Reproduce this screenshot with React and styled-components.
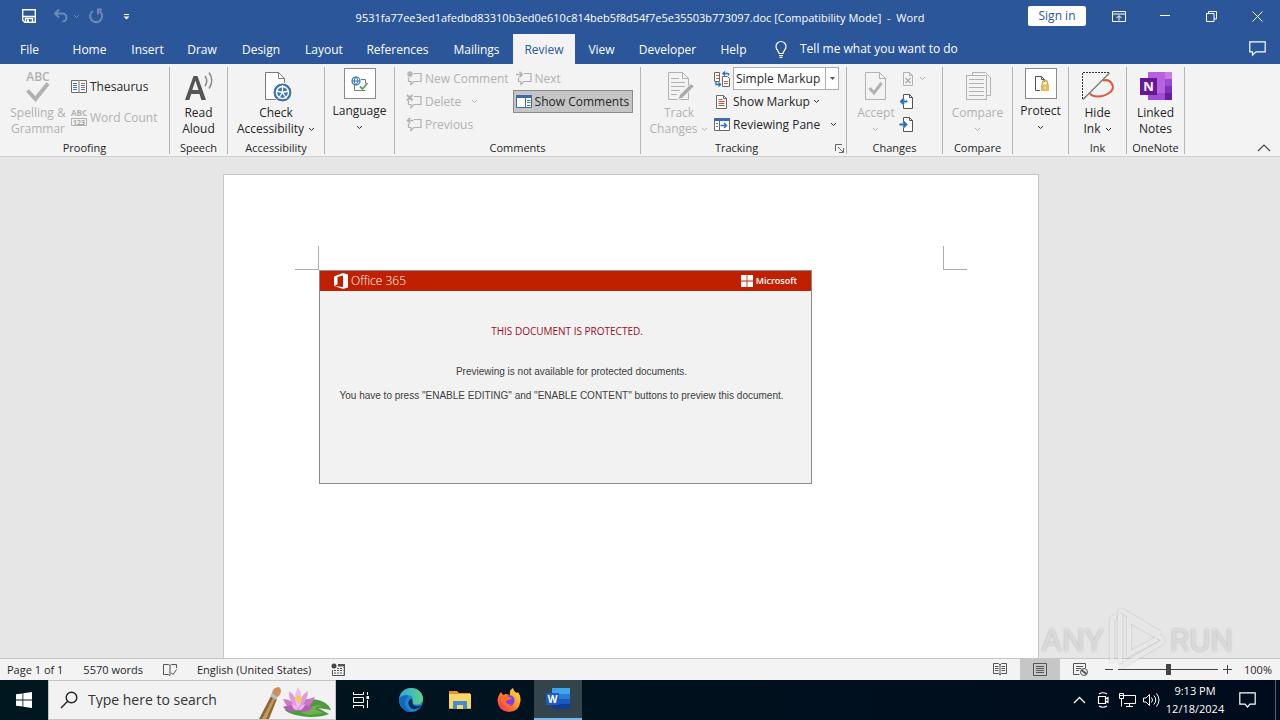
import React, { useState } from 'react';
import styled, { createGlobalStyle } from 'styled-components';

const GlobalStyle = createGlobalStyle`
  * { box-sizing: border-box; }
  body { margin: 0; }
  button, input, select { font: inherit; color: inherit; }
  button { background: none; border: 0; padding: 0; cursor: default; }
  svg { display: block; flex: none; overflow: visible; }
`;

/* ---------- Shell ---------- */

const Shell = styled.div`
  display: flex;
  flex-direction: column;
  height: 100vh;
  overflow: hidden;
  font-family: 'Open Sans', 'Noto Sans', sans-serif;
  font-size: 12px;
  line-height: 16px;
  color: #262626;
  background: #e6e6e6;
`;

const TitleBar = styled.header`
  display: grid;
  grid-template-columns: 1fr auto 1fr;
  align-items: center;
  height: 32px;
  color: #fff;
  background: #2b579a;
`;

const QuickAccess = styled.div`
  display: flex;
  align-items: center;
  gap: 8px;
  padding-left: 21px;
`;

const DocTitle = styled.h1`
  margin: 0;
  padding-top: 3px;
  font-size: 11px;
  font-weight: 400;
  white-space: pre;
`;

const WindowControls = styled.div`
  display: flex;
  align-items: center;
  justify-content: flex-end;
`;

const SignIn = styled.button`
  width: 58px;
  height: 20px;
  margin-right: 10px;
  color: #2b579a;
  background: #fff;
  border-radius: 2px;
`;

const WindowButton = styled.button`
  display: grid;
  place-items: center;
  width: ${(p) => p.$w || 46}px;
  height: 30px;
`;

const PlainButton = styled.button`
  display: grid;
  place-items: center;
  opacity: ${(p) => (p.$dim ? 0.3 : 1)};
`;

const TabBar = styled.nav`
  display: flex;
  align-items: flex-end;
  height: 32px;
  color: #fff;
  background: #2b579a;
`;

const Tab = styled.button`
  width: ${(p) => p.$w}px;
  height: 30px;
  padding-top: 2px;
  white-space: nowrap;
  color: ${(p) => (p.$active ? '#2b579a' : '#fff')};
  background: ${(p) => (p.$active ? '#f3f3f3' : 'transparent')};
`;

const TellMe = styled.button`
  display: flex;
  align-items: center;
  gap: 13px;
  height: 30px;
  margin-left: 15px;
`;

const CommentsButton = styled.button`
  display: grid;
  place-items: center;
  width: 46px;
  height: 32px;
  margin-left: auto;
`;

/* ---------- Ribbon ---------- */

const Ribbon = styled.section`
  display: flex;
  height: 93px;
  padding: 3px 0 2px;
  background: #f3f3f3;
  border-bottom: 1px solid #d2d0ce;
`;

const Group = styled.div`
  display: flex;
  flex: none;
  flex-direction: column;
  width: ${(p) => p.$w}px;
  border-right: 1px solid #b5b5b5;
`;

const GroupBody = styled.div`
  display: flex;
  flex: 1;
  justify-content: ${(p) => p.$justify || 'center'};
  padding-left: ${(p) => p.$pad || 0}px;
`;

const Caption = styled.div`
  display: flex;
  align-items: center;
  height: 12px;
  line-height: 12px;
  font-size: 11px;

  span {
    flex: 1;
    text-align: center;
  }
`;

const BigButton = styled.button`
  display: flex;
  flex-direction: column;
  align-items: center;
  gap: 2px;
  width: ${(p) => p.$w || 58}px;
  height: 72px;
  padding-top: 4px;
  white-space: nowrap;
  color: ${(p) => (p.disabled ? '#b1b1b1' : '#262626')};
`;

const BoxedButton = styled(BigButton)`
  padding-top: 1px;
  gap: 4px;
`;

const IconBox = styled.span`
  display: grid;
  place-items: center;
  width: 32px;
  height: 31px;
  background: #fff;
  border: 1px solid #8a8a8a;
`;

const Line = styled.span`
  display: flex;
  align-items: center;
  justify-content: center;
  gap: 4px;
  height: 16px;
`;

const Labels = styled.span`
  display: flex;
  flex-direction: column;
`;

const Stack = styled.div`
  display: flex;
  flex-direction: column;
  align-items: flex-start;
  padding-top: ${(p) => p.$top || 0}px;
  margin-left: ${(p) => p.$ml || 0}px;
`;

const SmallButton = styled.button`
  display: flex;
  align-items: center;
  gap: 3px;
  height: ${(p) => p.$h || 23}px;
  padding: 0 3px 0 2px;
  white-space: nowrap;
  color: ${(p) => (p.disabled ? '#b1b1b1' : '#262626')};
  background: ${(p) => (p.$on ? '#c5c5c5' : 'transparent')};
  border: 1px solid ${(p) => (p.$on ? '#8a8a8a' : 'transparent')};
`;

const Spacer = styled.span`
  width: 4px;
`;

const MarkupRow = styled.label`
  display: flex;
  align-items: center;
  gap: 3px;
  height: 23px;
  padding-left: 3px;
`;

const SelectFrame = styled.span`
  display: flex;
  width: 106px;
  height: 23px;
  background: #fff;
  border: 1px solid #ababab;

  select {
    flex: 1;
    min-width: 0;
    padding: 0 2px;
    appearance: none;
    background: none;
    border: 0;
    outline: 0;
  }

  i {
    display: grid;
    place-items: center;
    width: 13px;
    border-left: 1px solid #ababab;
    pointer-events: none;
  }
`;

const Launcher = styled.button`
  width: 14px;
  height: 12px;
  padding-left: 3px;
`;

const Collapse = styled.button`
  align-self: flex-end;
  margin: 0 9px 0 auto;
`;

/* ---------- Document ---------- */

const Workspace = styled.main`
  display: flex;
  flex: 1;
  justify-content: center;
  min-height: 0;
  padding: 17px 18px 0 0;
  overflow: hidden;
`;

const Paper = styled.article`
  width: 816px;
  background: #fff;
  border: 1px solid #c6c6c6;
  border-bottom: 0;
`;

const MarginRow = styled.div`
  display: flex;
  align-items: flex-end;
  justify-content: space-between;
  height: 95px;
  padding: 0 71px;
`;

const CropMark = styled.span`
  width: 24px;
  height: 24px;
  border: solid #ababab;
  border-width: ${(p) => (p.$side === 'left' ? '0 1px 1px 0' : '0 0 1px 1px')};
`;

const Notice = styled.section`
  width: 493px;
  height: 214px;
  margin-left: 95px;
  text-align: center;
  color: #404040;
  background: #f2f2f2;
  border: 1px solid #8a8a8a;
`;

const NoticeBar = styled.div`
  display: flex;
  align-items: center;
  justify-content: space-between;
  height: 20px;
  padding: 0 14px;
  color: #fff;
  background: #c01f00;
`;

const Brand = styled.span`
  display: flex;
  align-items: center;
  gap: 3px;
  font-size: ${(p) => p.$size}px;
  font-weight: ${(p) => p.$weight};
`;

const NoticeTitle = styled.h2`
  margin: 32px 0 21px;
  padding-left: 3px;
  font-size: 10px;
  font-weight: 400;
  line-height: 16px;
  color: #9c0c1c;
`;

const NoticeText = styled.p`
  margin: 0 8px 0 ${(p) => p.$indent || 0}px;
  font-family: 'Liberation Sans', Arial, sans-serif;
  font-size: 10px;
  line-height: 24px;
`;

/* ---------- Watermark ---------- */

const Watermark = styled.div`
  position: absolute;
  right: 47px;
  bottom: 48px;
  display: flex;
  align-items: center;
  gap: 5px;
  font-family: Roboto, 'Liberation Sans', sans-serif;
  font-size: 32px;
  line-height: 64px;
  color: rgba(255, 255, 255, 0.55);
  text-shadow: 0 0 2px rgba(120, 120, 120, 0.6);
  pointer-events: none;

  svg {
    filter: drop-shadow(0 0 1px rgba(120, 120, 120, 0.6));
  }
`;

/* ---------- Status bar ---------- */

const StatusBar = styled.footer`
  display: flex;
  align-items: center;
  height: 22px;
  padding: 0 8px 0 7px;
  font-size: 11px;
  background: #f3f3f3;
  border-top: 1px solid #c6c6c6;
`;

const StatusLeft = styled.div`
  display: flex;
  align-items: center;
  gap: 20px;
`;

const StatusRight = styled.div`
  display: flex;
  align-items: center;
  height: 100%;
  margin-left: auto;
`;

const ViewButton = styled.button`
  display: grid;
  place-items: center;
  width: 40px;
  height: 100%;
  background: ${(p) => (p.$on ? '#c6c6c6' : 'transparent')};
`;

const ZoomButton = styled.button`
  display: grid;
  place-items: center;
  width: 18px;
  height: 20px;
`;

const ZoomSlider = styled.input`
  width: 100px;
  height: 12px;
  margin: 0;
  appearance: none;
  background: linear-gradient(#444, #444) center / 100% 1px no-repeat;

  &::-webkit-slider-thumb {
    appearance: none;
    width: 5px;
    height: 11px;
    background: #444;
  }
`;

const ZoomValue = styled.button`
  width: 36px;
  text-align: right;
`;

/* ---------- Taskbar ---------- */

const Taskbar = styled.div`
  display: flex;
  height: 40px;
  color: #fff;
  background: linear-gradient(90deg, #00171f, #000c1d);
`;

const TaskButton = styled.button`
  display: grid;
  place-items: center;
  width: ${(p) => p.$w || 49}px;
  height: 40px;
  background: ${(p) => (p.$on ? '#33444c' : 'transparent')};
  border-bottom: ${(p) => (p.$on ? '2px solid #76b9ed' : '0')};
`;

const SearchBox = styled.label`
  display: flex;
  align-items: center;
  gap: 10px;
  width: 288px;
  padding-left: 11px;
  color: #222;
  background: #f2f2f2;
  border: 1px solid #c4c4c4;

  input {
    flex: 1;
    min-width: 0;
    padding: 0;
    font-size: 14px;
    background: none;
    border: 0;
    outline: 0;
  }

  input::placeholder {
    color: #333;
    opacity: 1;
  }
`;

const Tray = styled.div`
  display: flex;
  align-items: center;
  margin-left: auto;
`;

const Clock = styled.time`
  width: 64px;
  font-size: 11px;
  line-height: 18px;
  text-align: center;
`;

const ShowDesktop = styled.button`
  width: 5px;
  height: 40px;
  margin-left: 8px;
  border-left: 1px solid #5b6670;
`;

/* ---------- Icons ---------- */

const Svg = ({ w = 16, h = 16, box, children, ...rest }) => (
  <svg width={w} height={h} viewBox={box || `0 0 ${w} ${h}`} fill="none" stroke="currentColor" aria-hidden="true" {...rest}>
    {children}
  </svg>
);

const Chevron = () => (
  <Svg w={7} h={5}><path d="M1 1l2.5 2.5L6 1" /></Svg>
);

const SaveIcon = () => (
  <Svg><path d="M1.700 1.700h12.600v12.600H3.700l-2-2z" strokeWidth="1.400" /><path d="M2 8.500h12M4.500 14v-3.500h7V14" strokeWidth="1.400" /><path d="M6 11.500h2V14H6z" fill="currentColor" stroke="none" /></Svg>
);

const UndoIcon = () => (
  <Svg strokeWidth="2"><path d="M2 5.500h7.500a4 4 0 0 1 0 8M6 1.500l-4 4 4 4" /></Svg>
);

const RedoIcon = () => (
  <Svg strokeWidth="2"><path d="M11.500 3.200A6 6 0 1 1 5 3M14 1.500h-4v5" /></Svg>
);

const CustomizeIcon = () => (
  <Svg w={7} h={7}><path d="M1 1.500h5" /><path d="M.5 3.500h6l-3 3z" fill="currentColor" stroke="none" /></Svg>
);

const RibbonOptionsIcon = () => (
  <Svg w={14} h={11}><path d="M.5.5h13v10H.5zM.5 3h13M7 9.500V5M4.500 7L7 4.500 9.500 7" /></Svg>
);

const MinimizeIcon = () => <Svg w={10} h={10}><path d="M0 4.500h10" /></Svg>;

const RestoreIcon = () => (
  <Svg w={11} h={11}><path d="M.5 2.500h7.500v8H.5zM2.500 2.500v-2h8v7.500H8" /></Svg>
);

const CloseIcon = () => <Svg w={11} h={11}><path d="M.5.5l10 10M10.500.5l-10 10" /></Svg>;

const BulbIcon = () => (
  <Svg w={12} h={17} strokeWidth="1.200"><path d="M4 12.500C4 10 1 9 1 5.500a5 5 0 0 1 10 0C11 9 8 10 8 12.500zM4 14.500h4M4.500 16.400h3" /></Svg>
);

const BubbleIcon = () => (
  <Svg w={17} h={15} strokeWidth="1.200"><path d="M.8.8h15.400v10H7l-3.500 3.400v-3.400H.8z" /></Svg>
);

const SpellingIcon = () => (
  <Svg w={32} h={32}>
    <text x="16" y="10" textAnchor="middle" fontSize="12" fontWeight="600" fill="#b1b1b1" stroke="none">ABC</text>
    <path d="M5.500 19.500l8 8.500L26 12.500" stroke="#b1b1b1" strokeWidth="4" />
  </Svg>
);

const ThesaurusIcon = () => (
  <Svg>
    <path d="M.5 1.500h7l.5.5.5-.5h7v12h-7l-.5.5-.5-.5h-7z" fill="#fff" stroke="#6a6a6a" />
    <path d="M8 2v12" stroke="#6a6a6a" />
    <path d="M2 4.500h4M2 6.500h4M2 8.500h4M2 10.500h4M10 6.500h4M10 10.500h4" stroke="#4472b8" />
    <path d="M10 4.500h4M10 8.500h4" stroke="#c8604a" />
  </Svg>
);

const WordCountIcon = () => (
  <Svg stroke="#b1b1b1">
    <text x="8" y="6" textAnchor="middle" fontSize="8" fontWeight="700" fill="#b1b1b1" stroke="none">ABC</text>
    <path d="M.5 8.500h15v7H.5z" />
    <text x="8" y="15" textAnchor="middle" fontSize="7" fontWeight="700" fill="#a5a5a5" stroke="none">123</text>
  </Svg>
);

const ReadAloudIcon = () => (
  <Svg w={32} h={32}>
    <path d="M2 29L10.500 5h4L23 29h-4.600l-1.900-6H8.200l-1.800 6zM9.300 19h6.200L12.400 9.500z" fill="#555" stroke="none" />
    <path d="M22 5q3.500 5 0 10M26 1.500q5.500 8 0 16" stroke="#8a8a8a" strokeWidth="1.500" />
  </Svg>
);

const AccessibilityIcon = () => (
  <Svg w={32} h={32}>
    <path d="M5.500 1.500h13l6 6v21h-19z" fill="#fff" stroke="#7a7a7a" />
    <path d="M18.500 1.500v6h6" stroke="#7a7a7a" />
    <circle cx="22.500" cy="21.500" r="9.500" fill="#3d73ae" stroke="#fff" />
    <circle cx="22.500" cy="21.500" r="6" stroke="#fff" strokeWidth="1.500" />
    <path d="M22.500 14v7.500M16.500 20l6 1.500 6-1.500M18.500 27.500l4-6 4 6" stroke="#fff" strokeWidth="1.300" />
  </Svg>
);

const LanguageIcon = () => (
  <Svg w={18} h={16}>
    <path d="M10 3.500h4.500v4M3.500 9v5.500h11" stroke="#7a7a7a" />
    <circle cx="5" cy="5" r="4" stroke="#2f72b5" strokeWidth="1.200" />
    <path d="M1 5h8M5 1q-3.500 4 0 8M5 1q3.500 4 0 8" stroke="#2f72b5" />
    <path d="M9 10.500l2.500 2.500 5-6" stroke="#5b9e6c" strokeWidth="1.800" />
  </Svg>
);

const CommentIcon = ({ mark }) => (
  <Svg stroke="#b1b1b1" strokeWidth="1.200">
    <path d="M8 2.500h7v8H8L5 13.500v-3H2.500v-4" />
    {mark === 'add' && <path d="M4 0v6.500M1 3.200h6.500M1.800 1l4.400 4.400M6.200 1L1.800 5.400" />}
    {mark === 'delete' && <path d="M1 1l5.500 5.500M6.500 1L1 6.500" strokeWidth="1.800" />}
    {mark === 'prev' && <path d="M7.500 3.500H1.500M4.200.8L1.500 3.500l2.700 2.700" strokeWidth="1.600" />}
    {mark === 'next' && <path d="M0 3.500h6M3.500.8l2.700 2.700-2.700 2.700" strokeWidth="1.600" />}
  </Svg>
);

const ShowCommentsIcon = () => (
  <Svg>
    <path d="M.5 1.500h15v12H.5z" fill="#fff" stroke="#3b6cae" />
    <path d="M0 1h16v3H0z" fill="#3b6cae" stroke="none" />
    <path d="M9.500 4v10" stroke="#3b6cae" />
    <path d="M11 6.500h3.500M11 8.500h3.500M11 11.500h3.500" stroke="#3b6cae" />
  </Svg>
);

const TrackChangesIcon = () => (
  <Svg w={32} h={32} stroke="#b1b1b1">
    <path d="M5.500 1.500h14l6 6v21h-20z" /><path d="M19.500 1.500v6h6M8 7.500h8M8 11.500h14M8 15.500h14M8 19.500h9M8 23.500h6" />
    <path d="M15 28.500l1.500-4.500L28 12.500l3 3-11.500 11.500z" fill="#a9a9a9" stroke="#f3f3f3" />
  </Svg>
);

const MarkupIcon = () => (
  <Svg>
    <path d="M.5 1.500h5v9h-5zM8.500 5.500h5l2 2v8h-7z" fill="#fff" stroke="#6a6a6a" />
    <path d="M2 4.500h3M2 7.500h3M10 10.500h4M10 12.500h4" stroke="#c8604a" />
    <path d="M9 2.500h5M11 .5l-2 2 2 2M14.500 2v2.500M2 11v2.500h4M4.500 11.500l2 2-2 2" stroke="#2f72b5" strokeWidth="1.400" />
  </Svg>
);

const ShowMarkupIcon = () => (
  <Svg>
    <path d="M2.500 1.500h7l3 3v10h-10z" fill="#fff" stroke="#6a6a6a" /><path d="M9.500 1.500v3h3" stroke="#6a6a6a" />
    <path d="M4.500 5.500h4M4.500 7.500h6M4.500 9.500h6M4.500 11.500h6" stroke="#d0533b" />
  </Svg>
);

const ReviewPaneIcon = () => (
  <Svg>
    <path d="M.5 1.500h15v12H.5z" fill="#fff" stroke="#6a6a6a" /><path d="M0 1h16v3H0z" fill="#3b6cae" stroke="none" />
    <path d="M5.500 4v10" stroke="#6a6a6a" /><path d="M2 6.500h2M2 9.500h2" stroke="#6a6a6a" />
    <path d="M6.500 8.500h6M10 6l2.500 2.500L10 11" stroke="#2f72b5" strokeWidth="1.500" />
  </Svg>
);

const AcceptIcon = () => (
  <Svg w={32} h={32} stroke="#b1b1b1">
    <path d="M5.500 1.500h14l6 6v21h-20z" /><path d="M19.500 1.500v6h6" /><path d="M9.500 17l4.500 5 7.500-10" strokeWidth="3" />
  </Svg>
);

const RejectIcon = () => (
  <Svg stroke="#b1b1b1"><path d="M3.500 1.500h6l3 3v10h-9z" /><path d="M9.500 1.500v3h3" /><path d="M5.500 7l5 5M10.500 7l-5 5" strokeWidth="1.500" /></Svg>
);

const StepIcon = ({ back }) => (
  <Svg>
    <path d="M3.500 4.500v-4h6l3 3v11h-9V11" fill="#fff" stroke="#555" /><path d="M9.500.5v3h3" stroke="#555" />
    <path d={back ? 'M7.500 7.500H1M4 4.500l-3 3 3 3' : 'M-.5 7.500H6M3.300 4.500l3 3-3 3'} stroke="#2f6fb0" strokeWidth="2" />
  </Svg>
);

const CompareIcon = () => (
  <Svg w={32} h={32} stroke="#b1b1b1">
    <path d="M10.500 4V1.500h13l5 5v18H25" /><path d="M4.500 4.500h20v24h-20z" fill="#f3f3f3" />
    <path d="M7 8.500h15M7 12.500h15M7 16.500h15M7 20.500h15M7 24.500h15" />
  </Svg>
);

const ProtectIcon = () => (
  <Svg w={16} h={16}>
    <path d="M2.500.5h6l3 3V6M7 14.500H2.500V.5" stroke="#555" /><path d="M8.500.5v3h3" stroke="#555" />
    <path d="M8 8.500h8V15H8z" fill="#e9b95c" stroke="none" /><path d="M9.500 9V7a2.500 2.500 0 0 1 5 0v2" stroke="#d9a441" strokeWidth="1.300" />
    <path d="M12 10.500v2.500" stroke="#fff" />
  </Svg>
);

const HideInkIcon = () => (
  <Svg w={32} h={32}>
    <path d="M.5 28V1.500H27" stroke="#333" strokeDasharray="2 1" />
    <path d="M21 9.500c8-2 14 7 6 12.500-7 5-17 4-19 .5" stroke="#e0563f" strokeWidth="2" />
    <path d="M1 28.500L27.500 2" stroke="#777" strokeWidth="1.300" />
  </Svg>
);

const OneNoteIcon = () => (
  <Svg w={32} h={32} stroke="none">
    <path d="M8 1h24v28H8z" fill="#b763e0" /><path d="M25 1h7v7h-7z" fill="#c77bea" /><path d="M25 8h7v7h-7z" fill="#9a4bd0" />
    <path d="M25 15h7v7h-7z" fill="#8131b5" /><path d="M8 22h17v7H8z" fill="#a24bd3" /><path d="M25 22h7v7h-7z" fill="#671c9c" />
    <path d="M0 7h17v17H0z" fill="#6b1696" />
    <text x="8.500" y="20" textAnchor="middle" fontSize="13" fontWeight="700" fill="#fff">N</text>
  </Svg>
);

const LauncherIcon = () => (
  <Svg w={9} h={9} stroke="#666"><path d="M.5 7V.5H7M3 3l5 5M8.500 4v4.500H4" /></Svg>
);

const CollapseIcon = () => <Svg w={14} h={12} stroke="#444"><path d="M1 9l6-6 6 6" strokeWidth="1.200" /></Svg>;

const OfficeIcon = () => (
  <Svg w={14} h={16} stroke="none"><path d="M0 3.500L9 0l5 1.500v13L9 16 0 13l9 1V2.500L3.500 4v7.500L0 13z" fill="#fff" /></Svg>
);

const MicrosoftIcon = () => (
  <Svg w={12} h={12} stroke="none"><path d="M0 0h5.600v5.600H0zM6.400 0H12v5.600H6.400zM0 6.400h5.600V12H0zM6.400 6.400H12V12H6.400z" fill="#fff" /></Svg>
);

const PlayMark = () => (
  <Svg w={56} h={62} stroke="rgba(255,255,255,.6)" strokeWidth="4">
    <path d="M3 53V12q0-4 4-4M11 54V4q1-3 4-1l36 22M11 58l41-24q3-2 0-5L20 11v34l28-15" />
  </Svg>
);

const ProofIcon = () => (
  <Svg w={14} h={14} stroke="#555"><path d="M13.500 5V1.500h-5l-1.500 1-1.500-1h-5v10h5l1.500 1V2.500M8 9.500l2 2 3.500-5" /></Svg>
);

const MacroIcon = () => (
  <Svg w={14} h={13} stroke="#555"><path d="M1.500 7v5.500h11.500V4M3 7.500h9M3 10h9M6 5.500h6" strokeDasharray="2 1" /><path d="M1.500 7v5.500h12V3" /><circle cx="3" cy="3" r="2.500" fill="#444" stroke="none" /><path d="M7 1h7v2.500H7z" fill="#555" stroke="none" /></Svg>
);

const ReadModeIcon = () => (
  <Svg w={14} h={13} stroke="#555"><path d="M7 2L5.500.5h-5v10h5L7 12l1.500-1.500h5V.5h-5zM7 2v10M2 3.500h3.500M2 5.500h3.500M2 7.500h3.500M8.500 3.500H12M8.500 5.500H12M8.500 7.500H12" /></Svg>
);

const PrintLayoutIcon = () => (
  <Svg w={14} h={13} stroke="#555"><path d="M.5.5h13v12H.5zM3 3.500h8M3 5.500h8M3 7.500h8M3 9.500h8" /></Svg>
);

const WebLayoutIcon = () => (
  <Svg w={15} h={13} stroke="#555"><path d="M12.500 5V.5H.5v11h6M3 3.500h7M3 5.500h5M3 7.500h3" /><circle cx="11" cy="9" r="3.500" /><path d="M8.500 7l5 4" strokeWidth="2" /></Svg>
);

const WindowsIcon = () => (
  <Svg stroke="none"><path d="M0 2.300l6.500-.9v6.100H0zM7.300 1.300L16 0v7.500H7.300zM0 8.400h6.500v6.200L0 13.700zM7.300 8.400H16V16l-8.700-1.200z" fill="#fff" /></Svg>
);

const SearchIcon = () => (
  <Svg w={18} h={18} stroke="#222" strokeWidth="1.400"><circle cx="11.500" cy="6.500" r="5.300" /><path d="M7.700 10.300L1 17" /></Svg>
);

const LotusArt = () => (
  <Svg w={78} h={38} stroke="none">
    <path d="M2 38L14 15l6 3-8 20z" fill="#8d6836" /><path d="M5 38L16 17l2 1-9 20z" fill="#c39a5c" />
    <path d="M13 15l3-4 5 3-2 5z" fill="#b9bcc0" />
    <path d="M15 12q1-6 7-6 4 3 0 9l-2 1z" fill="#d08d5e" />
    <path d="M28 29q5-10 26-11 16 1 20 11l-13-2 11 6q-6 3-18 3-20-1-26-7z" fill="#4f9a41" />
    <path d="M44 32q8-8 22-8-8 2-8 4l8 4-14 2z" fill="#6eb34c" />
    <path d="M41 29q-11 0-15-11 11 0 15 11zM41 29q13-1 17-13-11 2-17 13z" fill="#cf76ca" />
    <path d="M41 28q-10-7-9-18 8 5 9 18zM41 28q10-7 10-18-9 5-10 18z" fill="#e29adf" />
    <path d="M41 28q-6-11 0-22 7 10 0 22z" fill="#f0bdec" />
    <path d="M41 29q-9 4-15-3 9-4 15 3zM41 29q8 5 15-3-8-4-15 3z" fill="#b95dbb" />
    <path d="M41 29q-5 1-6-6 5 1 6 6zM41 29q5 1 7-6-5 1-7 6z" fill="#eeb2e9" />
    <path d="M38 17q3-4 7 0l-3 6z" fill="#f2cf45" />
  </Svg>
);

const TaskViewIcon = () => (
  <Svg stroke="#fff"><path d="M0 2.500h10.500M0 13.500h10.500M.5 0v2.500M10.500 0v2.500M.5 16v-2.500M10.500 16v-2.500M.5 5.500h10v5H.5zM14.500 0v3M14.500 8v8" /><path d="M13.500 4h2.500v3h-2.500z" fill="#fff" stroke="none" /></Svg>
);

const EdgeIcon = () => (
  <Svg w={24} h={24} stroke="none">
    <defs>
      <linearGradient id="edgeTop"><stop stopColor="#2aa9e0" /><stop offset="1" stopColor="#5fd283" /></linearGradient>
    </defs>
    <circle cx="12" cy="12" r="12" fill="#1e86d2" />
    <path d="M.3 10C1.500 4 6 0 12 0c7 0 12 5 12 10.500 0 4-3 6-6.500 6-3 0-4.300-1.200-3.800-2.500 1.300-4-1-7-5.200-7C4.500 7 1.500 8.500.3 10z" fill="url(#edgeTop)" />
    <path d="M8.500 9.500C4 13.500 6 22 13.500 23.800 6 25 0 19 .2 11 2 8 5 7 8.500 7z" fill="#1468b8" />
    <path d="M13.700 14c-1 4 5 5 9 3-3 5-11 6-13 0-1-4 1-6 3-6z" fill="#0b2f55" />
  </Svg>
);

const ExplorerIcon = () => (
  <Svg w={22} h={19} stroke="none">
    <path d="M0 0h8l2 2h11v4H0z" fill="#e3962c" /><path d="M0 3h22v15H0z" fill="#fbd768" />
    <path d="M4 18v-7q0-1 1-1h12q1 0 1 1v7h-4v-4H8v4z" fill="#3f8fd2" /><path d="M0 17h4v1H0zM18 17h4v1h-4z" fill="#e3a72c" />
  </Svg>
);

const FirefoxIcon = () => (
  <Svg w={24} h={24} stroke="none">
    <defs>
      <linearGradient id="foxFire" x1="1" y1="0" x2="0" y2="1"><stop stopColor="#fff04a" /><stop offset=".5" stopColor="#ff8a1e" /><stop offset="1" stopColor="#f5156c" /></linearGradient>
    </defs>
    <path d="M4 4l2 3 3-1 4 1q-1-5 3-7 1 4 4 5l1-1q3 4 2.500 9Q22 24 12 24 1 23 .5 13 .5 8 4 4z" fill="url(#foxFire)" />
    <circle cx="12" cy="12.500" r="5.500" fill="#7b3ff0" />
    <path d="M4 8q5-2 8 1l3 1q-1 2-4 2-2 0-2 2 1 3 5 2-3 4-7 1-4-3-3-9z" fill="#ff6a2b" />
  </Svg>
);

const WordIcon = () => (
  <Svg w={24} h={22} stroke="none">
    <path d="M6 0h18v6H6z" fill="#41a5ee" /><path d="M6 6h18v5H6z" fill="#2b7cd3" /><path d="M6 11h18v5H6z" fill="#185abd" /><path d="M6 16h18v5H6z" fill="#103f91" />
    <path d="M0 5h13v12H0z" fill="#1b5cc0" />
    <text x="6.500" y="15" textAnchor="middle" fontSize="10" fontWeight="700" fill="#fff">W</text>
  </Svg>
);

const TrayChevronIcon = () => <Svg w={13} h={8}><path d="M1 7l5.500-5.500L12 7" strokeWidth="1.300" /></Svg>;

const MeetIcon = () => (
  <Svg w={12} h={16}><path d="M1.500 4.500h7v7h-7zM8.500 7l2.500-1.500v5L8.500 9M2 2q4-2.500 8 0M2 14q4 2.500 8 0" strokeWidth="1.200" /></Svg>
);

const NetworkIcon = () => (
  <Svg w={17} h={14}><path d="M5 2.500h11.500v8H5M.5.5h4v5h-4zM2.500 6v7.500M7 13.500h7M10.500 11v2.500M1 2.500h3" /></Svg>
);

const VolumeIcon = () => (
  <Svg w={17} h={14}><path d="M.5 5v4h2.500l3.500 3.500v-11L3 5zM8.500 4.500q2 2.500 0 5M11 2.500q3.500 4.500 0 9M13.500.5q5 6.500 0 13" /></Svg>
);

const ActionIcon = () => (
  <Svg w={17} h={16} strokeWidth="1.200"><path d="M.8.8h15.400v11.400H11L8.500 15 6 12.200H.8z" /></Svg>
);

const tabs = [
  { label: 'File', w: 59 },
  { label: 'Home', w: 61 },
  { label: 'Insert', w: 55 },
  { label: 'Draw', w: 54 },
  { label: 'Design', w: 64 },
  { label: 'Layout', w: 62 },
  { label: 'References', w: 85 },
  { label: 'Mailings', w: 73 },
  { label: 'Review', w: 62 },
  { label: 'View', w: 53 },
  { label: 'Developer', w: 79 },
  { label: 'Help', w: 53 },
];

const RibbonGroup = ({ width, caption, launcher, justify, pad, children }) => (
  <Group $w={width}>
    <GroupBody $justify={justify} $pad={pad}>{children}</GroupBody>
    <Caption>
      <span>{caption}</span>
      {launcher && <Launcher aria-label="Tracking options"><LauncherIcon /></Launcher>}
    </Caption>
  </Group>
);

const App = () => {
  const [activeTab, setActiveTab] = useState('Review');
  const [markup, setMarkup] = useState('Simple Markup');
  const [zoom, setZoom] = useState(100);

  return (
    <Shell>
      <GlobalStyle />

      <TitleBar>
        <QuickAccess>
          <PlainButton aria-label="Save"><SaveIcon /></PlainButton>
          <PlainButton aria-label="Undo" $dim><Line><Spacer /><UndoIcon /><Chevron /></Line></PlainButton>
          <PlainButton aria-label="Repeat" $dim><RedoIcon /></PlainButton>
          <WindowButton $w={28} aria-label="Customize Quick Access Toolbar"><CustomizeIcon /></WindowButton>
        </QuickAccess>
        <DocTitle>9531fa77ee3ed1afedbd83310b3ed0e610c814beb5f8d54f7e5e35503b773097.doc [Compatibility Mode]  -  Word</DocTitle>
        <WindowControls>
          <SignIn>Sign in</SignIn>
          <WindowButton aria-label="Ribbon display options"><RibbonOptionsIcon /></WindowButton>
          <WindowButton aria-label="Minimize"><MinimizeIcon /></WindowButton>
          <WindowButton aria-label="Restore"><RestoreIcon /></WindowButton>
          <WindowButton aria-label="Close"><CloseIcon /></WindowButton>
        </WindowControls>
      </TitleBar>

      <TabBar>
        {tabs.map((tab) => (
          <Tab key={tab.label} $w={tab.w} $active={tab.label === activeTab} onClick={() => setActiveTab(tab.label)}>
            {tab.label}
          </Tab>
        ))}
        <TellMe><BulbIcon />Tell me what you want to do</TellMe>
        <CommentsButton aria-label="Comments"><BubbleIcon /></CommentsButton>
      </TabBar>

      <Ribbon>
        <RibbonGroup width={170} caption="Proofing" justify="flex-start" pad={9}>
          <BigButton disabled>
            <SpellingIcon />
            <Labels><Line>Spelling &amp;</Line><Line>Grammar</Line></Labels>
          </BigButton>
          <Stack $top={4} $ml={1}>
            <SmallButton $h={31}><ThesaurusIcon />Thesaurus</SmallButton>
            <SmallButton $h={31} disabled><WordCountIcon />Word Count</SmallButton>
          </Stack>
        </RibbonGroup>

        <RibbonGroup width={58} caption="Speech">
          <BigButton $w={56}>
            <ReadAloudIcon />
            <Labels><Line>Read</Line><Line>Aloud</Line></Labels>
          </BigButton>
        </RibbonGroup>

        <RibbonGroup width={97} caption="Accessibility">
          <BigButton $w={92}>
            <AccessibilityIcon />
            <Labels><Line>Check</Line><Line>Accessibility <Chevron /></Line></Labels>
          </BigButton>
        </RibbonGroup>

        <RibbonGroup width={70}>
          <BoxedButton>
            <IconBox><LanguageIcon /></IconBox>
            <Labels><Line>Language</Line><Line><Chevron /></Line></Labels>
          </BoxedButton>
        </RibbonGroup>

        <RibbonGroup width={246} caption="Comments" justify="flex-start" pad={8}>
          <Stack>
            <SmallButton disabled><CommentIcon mark="add" />New Comment</SmallButton>
            <SmallButton disabled><CommentIcon mark="delete" />Delete <Spacer /><Chevron /></SmallButton>
            <SmallButton disabled><CommentIcon mark="prev" />Previous</SmallButton>
          </Stack>
          <Stack>
            <SmallButton disabled><CommentIcon mark="next" />Next</SmallButton>
            <SmallButton $on aria-pressed="true"><ShowCommentsIcon />Show Comments</SmallButton>
          </Stack>
        </RibbonGroup>

        <RibbonGroup width={206} caption="Tracking" launcher justify="flex-start" pad={9}>
          <BigButton disabled>
            <TrackChangesIcon />
            <Labels><Line>Track</Line><Line>Changes <Chevron /></Line></Labels>
          </BigButton>
          <Stack $ml={3}>
            <MarkupRow>
              <MarkupIcon />
              <SelectFrame>
                <select aria-label="Display for review" value={markup} onChange={(e) => setMarkup(e.target.value)}>
                  <option>Simple Markup</option>
                  <option>All Markup</option>
                  <option>No Markup</option>
                  <option>Original</option>
                </select>
                <i><Svg w={5} h={3} stroke="none"><path d="M0 0h5L2.500 3z" fill="#555" /></Svg></i>
              </SelectFrame>
            </MarkupRow>
            <SmallButton><ShowMarkupIcon />Show Markup <Chevron /></SmallButton>
            <SmallButton><ReviewPaneIcon />Reviewing Pane <Spacer /><Chevron /></SmallButton>
          </Stack>
        </RibbonGroup>

        <RibbonGroup width={96} caption="Changes" justify="flex-start">
          <BigButton disabled>
            <AcceptIcon />
            <Labels><Line>Accept</Line><Line><Chevron /></Line></Labels>
          </BigButton>
          <Stack $ml={-8}>
            <SmallButton disabled aria-label="Reject"><RejectIcon /><Chevron /></SmallButton>
            <SmallButton aria-label="Previous change"><StepIcon back /></SmallButton>
            <SmallButton aria-label="Next change"><StepIcon /></SmallButton>
          </Stack>
        </RibbonGroup>

        <RibbonGroup width={70} caption="Compare">
          <BigButton disabled>
            <CompareIcon />
            <Labels><Line>Compare</Line><Line><Chevron /></Line></Labels>
          </BigButton>
        </RibbonGroup>

        <RibbonGroup width={56}>
          <BoxedButton $w={54}>
            <IconBox><ProtectIcon /></IconBox>
            <Labels><Line>Protect</Line><Line><Chevron /></Line></Labels>
          </BoxedButton>
        </RibbonGroup>

        <RibbonGroup width={58} caption="Ink">
          <BigButton $w={54}>
            <HideInkIcon />
            <Labels><Line>Hide</Line><Line>Ink <Chevron /></Line></Labels>
          </BigButton>
        </RibbonGroup>

        <RibbonGroup width={58} caption="OneNote">
          <BigButton $w={54}>
            <OneNoteIcon />
            <Labels><Line>Linked</Line><Line>Notes</Line></Labels>
          </BigButton>
        </RibbonGroup>

        <Collapse aria-label="Collapse the ribbon"><CollapseIcon /></Collapse>
      </Ribbon>

      <Workspace>
        <Paper>
          <MarginRow><CropMark $side="left" /><CropMark $side="right" /></MarginRow>
          <Notice>
            <NoticeBar>
              <Brand $size={12} $weight={300}><OfficeIcon />Office 365</Brand>
              <Brand $size={9} $weight={600}><MicrosoftIcon />Microsoft</Brand>
            </NoticeBar>
            <NoticeTitle>THIS DOCUMENT IS PROTECTED.</NoticeTitle>
            <NoticeText $indent={20}>Previewing is not available for protected documents.</NoticeText>
            <NoticeText>You have to press "ENABLE EDITING" and "ENABLE CONTENT" buttons to preview this document.</NoticeText>
          </Notice>
        </Paper>
      </Workspace>

      <StatusBar>
        <StatusLeft>
          <span>Page 1 of 1</span>
          <span>5570 words</span>
          <ProofIcon />
          <span>English (United States)</span>
          <MacroIcon />
        </StatusLeft>
        <StatusRight>
          <ViewButton aria-label="Read mode"><ReadModeIcon /></ViewButton>
          <ViewButton aria-label="Print layout" $on><PrintLayoutIcon /></ViewButton>
          <ViewButton aria-label="Web layout"><WebLayoutIcon /></ViewButton>
          <ZoomButton aria-label="Zoom out"><Svg w={9} h={9} stroke="#444"><path d="M0 4.500h8" /></Svg></ZoomButton>
          <ZoomSlider type="range" min="0" max="200" aria-label="Zoom" value={zoom} onChange={(e) => setZoom(Number(e.target.value))} />
          <ZoomButton aria-label="Zoom in"><Svg w={9} h={9} stroke="#444"><path d="M0 4.500h9M4.500 0v9" /></Svg></ZoomButton>
          <ZoomValue>{zoom}%</ZoomValue>
        </StatusRight>
      </StatusBar>

      <Taskbar>
        <TaskButton $w={48} aria-label="Start"><WindowsIcon /></TaskButton>
        <SearchBox>
          <SearchIcon />
          <input type="text" placeholder="Type here to search" aria-label="Search" />
          <LotusArt />
        </SearchBox>
        <TaskButton $w={50} aria-label="Task view"><TaskViewIcon /></TaskButton>
        <TaskButton aria-label="Edge"><EdgeIcon /></TaskButton>
        <TaskButton aria-label="File Explorer"><ExplorerIcon /></TaskButton>
        <TaskButton $w={50} aria-label="Firefox"><FirefoxIcon /></TaskButton>
        <TaskButton $w={48} $on aria-label="Word"><WordIcon /></TaskButton>
        <Tray>
          <TaskButton $w={24} aria-label="Show hidden icons"><TrayChevronIcon /></TaskButton>
          <TaskButton $w={24} aria-label="Meet now"><MeetIcon /></TaskButton>
          <TaskButton $w={24} aria-label="Network"><NetworkIcon /></TaskButton>
          <TaskButton $w={24} aria-label="Volume"><VolumeIcon /></TaskButton>
          <Clock>9:13 PM<br />12/18/2024</Clock>
          <TaskButton $w={40} aria-label="Notifications"><ActionIcon /></TaskButton>
          <ShowDesktop aria-label="Show desktop" />
        </Tray>
      </Taskbar>

      <Watermark><span>ANY</span><PlayMark /><span>RUN</span></Watermark>
    </Shell>
  );
};

export default App;
